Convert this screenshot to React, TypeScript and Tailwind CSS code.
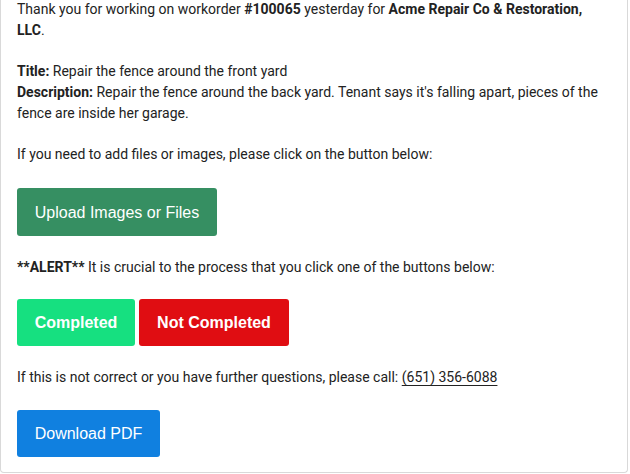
export default function App() {
  return (
    <div className="w-[630px] h-[474px] bg-white overflow-hidden">
      <div
        className="w-[628px] h-[474px] border border-t-0 border-[#d9d9d9] rounded-b-[4px] px-4 text-[14px] leading-[21px] text-[#222222]"
        style={{ fontFamily: "Roboto, 'Liberation Sans', sans-serif" }}
      >
        <p className="-mt-[1px]">
          Thank you for working on workorder <b>#100065</b> yesterday for{" "}
          <b>Acme Repair Co &amp; Restoration, LLC</b>.
        </p>
        <p className="mt-[20px]">
          <b>Title:</b> Repair the fence around the front yard
          <br />
          <b>Description:</b> Repair the fence around the back yard. Tenant says it's falling apart, pieces of the fence are inside her garage.
        </p>
        <p className="mt-[20px]">If you need to add files or images, please click on the button below:</p>
        <div className="mt-[23px] flex">
          <a
            className="h-[48px] w-[200px] flex items-center justify-center rounded-[3px] bg-[#368f62] text-white text-[16px]"
            style={{ fontFamily: "'Liberation Sans', Arial, sans-serif" }}
          >
            Upload Images or Files
          </a>
        </div>
        <p className="mt-[21px]">
          <b>**ALERT**</b> It is crucial to the process that you click one of the buttons below:
        </p>
        <div
          className="mt-[21px] flex gap-[4px] text-white text-[16px] font-bold"
          style={{ fontFamily: "'Liberation Sans', Arial, sans-serif" }}
        >
          <a className="h-[47px] w-[118px] flex items-center justify-center rounded-[3px] bg-[#16e080]">Completed</a>
          <a className="h-[47px] w-[150px] flex items-center justify-center rounded-[3px] bg-[#e00d12]">Not Completed</a>
        </div>
        <p className="mt-[21px]">
          If this is not correct or you have further questions, please call:{" "}
          <a className="underline underline-offset-[3px]">(651) 356-6088</a>
        </p>
        <div className="mt-[22px] flex">
          <a
            className="h-[47px] w-[143px] flex items-center justify-center rounded-[3px] bg-[#1080e0] text-white text-[16px]"
            style={{ fontFamily: "'Liberation Sans', Arial, sans-serif" }}
          >
            Download PDF
          </a>
        </div>
      </div>
    </div>
  );
}
